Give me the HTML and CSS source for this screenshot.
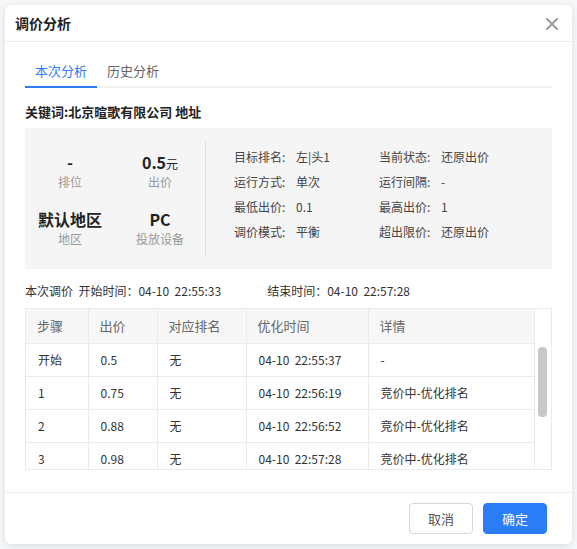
FILE: index.html
```html
<!DOCTYPE html>
<html lang="zh-CN">
<head>
    <meta charset="UTF-8">
    <title>调价分析</title>
    <link rel="stylesheet" href="styles.css">
</head>
<body>
    <div class="modal">
        <div class="modal-header">
            <span class="modal-title">调价分析</span>
            <span class="modal-close">
                <svg width="12" height="12" viewBox="0 0 12 12"><path d="M1 1L11 11M11 1L1 11" stroke="#999" stroke-width="2" stroke-linecap="round"/></svg>
            </span>
        </div>
        <div class="modal-body">
            <div class="tabs">
                <div class="tab tab-active">本次分析</div>
                <div class="tab">历史分析</div>
            </div>
            <div class="keyword">关键词:北京暄歌有限公司 地址</div>
            <div class="panel">
                <div class="stats">
                    <div class="stat">
                        <div class="stat-value">-</div>
                        <div class="stat-label">排位</div>
                    </div>
                    <div class="stat">
                        <div class="stat-value">0.5<small>元</small></div>
                        <div class="stat-label">出价</div>
                    </div>
                    <div class="stat">
                        <div class="stat-value">默认地区</div>
                        <div class="stat-label">地区</div>
                    </div>
                    <div class="stat">
                        <div class="stat-value">PC</div>
                        <div class="stat-label">投放设备</div>
                    </div>
                </div>
                <div class="info">
                    <div class="info-item"><span class="info-label">目标排名:</span><span>左|头1</span></div>
                    <div class="info-item"><span class="info-label">当前状态:</span><span>还原出价</span></div>
                    <div class="info-item"><span class="info-label">运行方式:</span><span>单次</span></div>
                    <div class="info-item"><span class="info-label">运行间隔:</span><span>-</span></div>
                    <div class="info-item"><span class="info-label">最低出价:</span><span>0.1</span></div>
                    <div class="info-item"><span class="info-label">最高出价:</span><span>1</span></div>
                    <div class="info-item"><span class="info-label">调价模式:</span><span>平衡</span></div>
                    <div class="info-item"><span class="info-label">超出限价:</span><span>还原出价</span></div>
                </div>
            </div>
            <div class="time-line">
                <span>本次调价&nbsp; 开始时间：04-10&nbsp; 22:55:33</span>
                <span class="time-end">结束时间：04-10&nbsp; 22:57:28</span>
            </div>
            <div class="table-box">
                <div class="table-scroll">
                    <table>
                        <colgroup>
                            <col style="width: 62px">
                            <col style="width: 69px">
                            <col style="width: 89px">
                            <col style="width: 122px">
                            <col>
                        </colgroup>
                        <thead>
                            <tr><th>步骤</th><th>出价</th><th>对应排名</th><th>优化时间</th><th>详情</th></tr>
                        </thead>
                        <tbody>
                            <tr><td>开始</td><td>0.5</td><td>无</td><td>04-10&nbsp; 22:55:37</td><td>-</td></tr>
                            <tr><td>1</td><td>0.75</td><td>无</td><td>04-10&nbsp; 22:56:19</td><td>竞价中-优化排名</td></tr>
                            <tr><td>2</td><td>0.88</td><td>无</td><td>04-10&nbsp; 22:56:52</td><td>竞价中-优化排名</td></tr>
                            <tr><td>3</td><td>0.98</td><td>无</td><td>04-10&nbsp; 22:57:28</td><td>竞价中-优化排名</td></tr>
                        </tbody>
                    </table>
                </div>
                <div class="gutter"><div class="thumb"></div></div>
            </div>
        </div>
        <div class="modal-footer">
            <button class="btn">取消</button>
            <button class="btn btn-primary">确定</button>
        </div>
    </div>
</body>
</html>
```

FILE: styles.css
```css
* {
    box-sizing: border-box;
}
body {
    margin: 0;
    padding: 5px;
    background: #f7f8fa;
    font-family: "Noto Sans CJK SC", "Liberation Sans", sans-serif;
    color: #333;
}
.modal {
    width: 567px;
    background: #fff;
    border-radius: 6px;
    box-shadow: 0 2px 8px rgba(0, 0, 0, 0.12);
}
.modal-header {
    display: flex;
    align-items: center;
    justify-content: space-between;
    height: 37px;
    padding: 0 14px 0 10px;
    border-bottom: 1px solid #ececec;
}
.modal-title {
    font-size: 14px;
    font-weight: bold;
    color: #222;
}
.modal-close {
    display: flex;
    margin-top: 1px;
}
.modal-body {
    padding: 14px 20px 22px 20px;
}
.tabs {
    display: flex;
    border-bottom: 2px solid #f2f2f2;
}
.tab {
    height: 32px;
    line-height: 30px;
    padding: 0 10px;
    font-size: 13px;
    color: #666;
    margin-bottom: -2px;
    border-bottom: 2px solid transparent;
}
.tab-active {
    color: #2f7cf6;
    border-bottom-color: #2f7cf6;
}
.keyword {
    margin-top: 14px;
    font-size: 13px;
    font-weight: bold;
    line-height: 20px;
    color: #222;
}
.panel {
    display: flex;
    margin-top: 6px;
    padding: 14px 0;
    background: #f5f5f5;
}
.stats {
    display: grid;
    grid-template-columns: 90px 90px;
    row-gap: 18px;
    align-content: center;
    height: 113px;
    border-right: 1px solid #dcdcdc;
}
.stat {
    text-align: center;
}
.stat-value {
    height: 22px;
    font-size: 16px;
    font-weight: bold;
    line-height: 22px;
    color: #222;
}
.stat-value small {
    font-size: 12px;
    font-weight: normal;
}
.stat-label {
    height: 17px;
    font-size: 12px;
    line-height: 17px;
    color: #999;
}
.info {
    display: grid;
    grid-template-columns: 145px 145px;
    grid-auto-rows: 25px;
    align-content: start;
    padding: 2px 0 0 28px;
    font-size: 12px;
    color: #444;
}
.info-item {
    display: flex;
    align-items: center;
}
.info-label {
    width: 62px;
}
.time-line {
    display: flex;
    margin-top: 12px;
    font-size: 12px;
    line-height: 20px;
    color: #333;
}
.time-end {
    margin-left: 46px;
}
.table-box {
    display: flex;
    height: 162px;
    margin-top: 7px;
    border: 1px solid #ebebeb;
}
.table-scroll {
    flex: 1;
    overflow: hidden;
}
table {
    width: 100%;
    border-collapse: collapse;
    table-layout: fixed;
    font-size: 12px;
}
th, td {
    height: 33px;
    padding: 0 12px;
    text-align: left;
    border-right: 1px solid #ebebeb;
    border-bottom: 1px solid #ebebeb;
    white-space: nowrap;
}
th {
    height: 34px;
    padding: 0 11px;
    font-size: 13px;
    font-weight: normal;
    color: #666;
    background: #f7f7f7;
}
td {
    color: #333;
}
.gutter {
    width: 16px;
    padding: 38px 4px 0 3px;
}
.thumb {
    height: 70px;
    border-radius: 4px;
    background: #c8c8c8;
}
.modal-footer {
    display: flex;
    justify-content: flex-end;
    gap: 10px;
    padding: 10px 25px 10px 0;
    border-top: 1px solid #ececec;
}
.btn {
    width: 64px;
    height: 31px;
    border: 1px solid #d6d6d6;
    border-radius: 4px;
    background: #fff;
    font-family: inherit;
    font-size: 13px;
    color: #555;
}
.btn-primary {
    border-color: #2b7cf7;
    background: #2b7cf7;
    color: #fff;
}
```
